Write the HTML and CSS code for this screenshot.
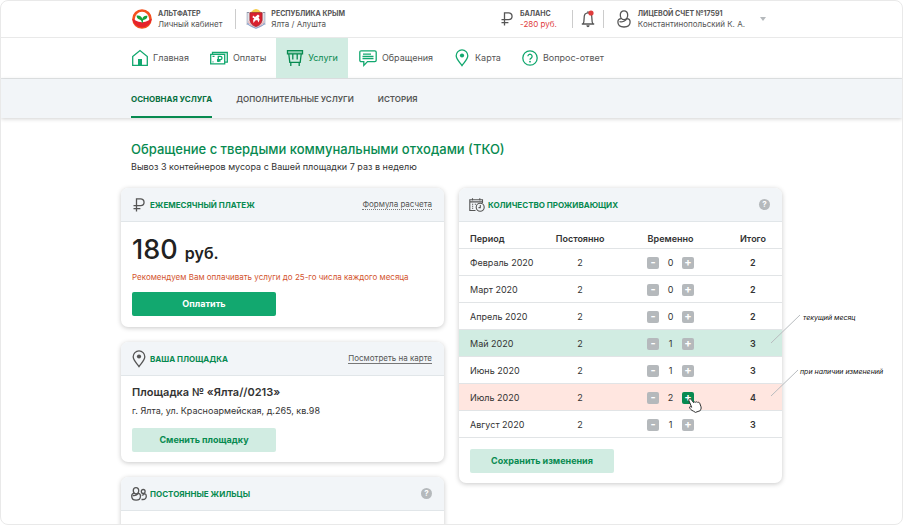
FILE: index.html
```html
<!DOCTYPE html>
<html lang="ru">
<head>
<meta charset="utf-8">
<meta name="viewport" content="width=device-width, initial-scale=1">
<title>Альтфатер — Личный кабинет</title>
<link rel="stylesheet" href="styles.css">
</head>
<body>
<svg class="sprite" aria-hidden="true">
  <symbol id="ruble" viewBox="0 0 12 14"><path d="M3.5 13.5V.8H7.6a3.4 3.4 0 0 1 0 6.9H.5M.5 10.6H7.4" /></symbol>
  <symbol id="pin" viewBox="0 0 14 18"><path d="M7 16.600C4.500 13 1.200 10 1.200 6.700a5.800 5.800 0 0 1 11.600 0C12.800 10 9.500 13 7 16.600Z"/><circle class="fill" cx="7" cy="6.500" r="2.100"/></symbol>
  <symbol id="person" viewBox="0 0 14 18"><path d="M7 .9C4.700.9 3.300 2.600 3.300 4.900 3.300 7.700 5 9.600 7 9.600s3.700-1.900 3.700-4.700C10.700 2.600 9.300.9 7 .9Z"/><path d="M4.200 8.600C2.200 8.600.9 10 .9 12 .9 15.100 3.500 17 7 17s6.100-1.900 6.100-5c0-2-1.300-3.400-3.300-3.400-1 2.200-4.200 3.600-7.300 3"/></symbol>
</svg>
<div class="frame">
  <header class="topbar">
    <div class="wrap topbar-row">
      <a class="brand" href="#">
        <svg class="logo" viewBox="0 0 20 20" aria-hidden="true">
          <circle cx="10" cy="10" r="8.500" fill="#fff" stroke="#f4511e" stroke-width="2.600"/>
          <path d="M.2 10c2.800.3 4.500 3.200 9.800 3.200s7-2.900 9.800-3.200A9.900 9.900 0 0 1 .2 10Z" fill="#e5232b"/>
          <path d="M9.900 13.800C9.600 10.500 8 10.800 6.300 9.900 5 9.200 4.700 7.700 4.600 6.500c3.200-.4 5.300.7 5.600 3.600.5-2.600 2.300-3.800 5.200-3.300.1 2.800-1.600 4.100-4.200 4.100-.4.900-.3 1.900-.2 2.900Z" fill="#17a23c"/>
        </svg>
        <span class="meta"><b>АЛЬТФАТЕР</b><span>Личный кабинет</span></span>
      </a>
      <a class="region" href="#">
        <svg class="crest" viewBox="0 0 20 20" aria-hidden="true">
          <path d="M5 3Q10-3 15 3L13 5H7Z" fill="#f5cb49"/>
          <path d="M1.500 3v13M18.500 3v13" stroke="#c3c8d4" stroke-width="2"/>
          <path d="M1 3.500h2M17 3.500h2" stroke="#8f95a5"/>
          <path d="M1.500 14C3 17.500 7 17.500 10 19.300 13 17.500 17 17.500 18.500 14" fill="none" stroke="#8fa5cc" stroke-width="1.200"/>
          <path d="M2.500 12.500C4 16.500 7 16.500 10 18c3-1.500 6-1.500 7.500-5.500" fill="none" stroke="#e99a9c" stroke-width="1"/>
          <path d="M3.800 3.600h12.400v7.700q-.4 4.500-6.200 6.200-5.800-1.700-6.200-6.200Z" fill="#d9202e" stroke="#8c2d36" stroke-width=".7"/>
          <path d="M7 6.500 9 8l3-2.500 1.700 1.500-1.200 1.500 1.200 2-1.200 3-1.200-2.500-2 .5-1.800 2.500-.4-3 1.200-1.500-1.800-1Z" fill="#fff"/>
        </svg>
        <span class="meta"><b>РЕСПУБЛИКА КРЫМ</b><span>Ялта / Алушта</span></span>
      </a>
      <div class="balance">
        <svg class="line-icon ruble" aria-hidden="true"><use href="#ruble"/></svg>
        <span class="meta"><b>БАЛАНС</b><span class="debt">-280 руб.</span></span>
      </div>
      <button class="bell" type="button" aria-label="Уведомления">
        <svg class="line-icon" viewBox="0 0 14 18" aria-hidden="true"><path d="M.8 14h12.400M2.200 13.600C3.900 11.500 2.200 6.500 4 4.200Q5.200 2.800 7 2.800T10 4.200C11.800 6.500 10.100 11.500 11.800 13.600M7 2.800V1.300"/><path class="fill" d="M5.300 15.300h3.400q-.3 1.900-1.700 1.900t-1.700-1.900Z"/><circle class="alert" cx="10" cy="3" r="2.600"/></svg>
      </button>
      <button class="account" type="button">
        <svg class="line-icon" aria-hidden="true"><use href="#person"/></svg>
        <span class="meta"><b>ЛИЦЕВОЙ СЧЕТ №17591</b><span>Константинопольский К. А.</span></span>
        <span class="caret"></span>
      </button>
    </div>
  </header>

  <nav class="mainnav" aria-label="Разделы">
    <div class="wrap mainnav-row">
      <a href="#"><svg viewBox="0 0 16 16" aria-hidden="true"><path d="M.7 6.500 8 .6l7.300 5.900v8.800H.7Z"/><path class="fill" d="M6 9h4v6.300H6z"/></svg>Главная</a>
      <a href="#"><svg class="wide" viewBox="0 0 18 16" aria-hidden="true"><path d="M.7 4.300h14v9.500H.7ZM2.500 4V2.500h14.800v9.700h-2.300"/><path d="M8.300 12V6.300h2a1.700 1.700 0 0 1 0 3.400H7M7 11h3.500M2.500 6.300h2M2.500 11.800h1"/></svg>Оплаты</a>
      <a class="active" href="#" aria-current="page"><svg viewBox="0 0 16 16" aria-hidden="true"><path class="tint" d="M.5.700h15v3.200H.5Z"/><path d="M1.800 4l1 8.300h10.400L14.200 4M3.800 12.300v3.700M12.200 12.300v3.700M5.800 4v5.500M10.200 4v5.500"/></svg>Услуги</a>
      <a href="#"><svg class="wide" viewBox="0 0 18 16" aria-hidden="true"><path d="M2.200.8h13.600q1.400 0 1.400 1.400v8q0 1.400-1.400 1.400H8.500L4.800 15.400v-3.800H2.200Q.8 11.600.8 10.200V2.200Q.8.8 2.200.8ZM4 4.200h8M3.500 6.500h11M3.500 8.700h11"/></svg>Обращения</a>
      <a href="#"><svg class="tall" aria-hidden="true"><use href="#pin"/></svg>Карта</a>
      <a href="#"><svg viewBox="0 0 16 16" aria-hidden="true"><circle cx="8" cy="8" r="7.200"/><path d="M5.900 6.300a2.100 2.100 0 1 1 3.300 1.800Q8 8.800 8 9.700"/><circle class="fill" cx="8" cy="11.700" r=".9"/></svg>Вопрос-ответ</a>
    </div>
  </nav>

  <nav class="subnav" aria-label="Услуги">
    <div class="wrap subnav-row">
      <a class="active" href="#" aria-current="page">ОСНОВНАЯ УСЛУГА</a>
      <a href="#">ДОПОЛНИТЕЛЬНЫЕ УСЛУГИ</a>
      <a href="#">ИСТОРИЯ</a>
    </div>
  </nav>

  <main class="wrap">
    <div class="intro">
      <h1>Обращение с твердыми коммунальными отходами (ТКО)</h1>
      <p>Вывоз 3 контейнеров мусора с Вашей площадки 7 раз в неделю</p>
    </div>
    <div class="columns">
      <div class="column">
        <section class="card">
          <div class="card-head">
            <svg class="line-icon short" aria-hidden="true"><use href="#ruble"/></svg>
            <h2>ЕЖЕМЕСЯЧНЫЙ ПЛАТЕЖ</h2>
            <a class="dotted" href="#">Формула расчета</a>
          </div>
          <div class="card-body payment">
            <p class="sum">180 <span>руб.</span></p>
            <p class="advice">Рекомендуем Вам оплачивать услуги до 25-го числа каждого месяца</p>
            <button class="btn primary" type="button">Оплатить</button>
          </div>
        </section>
        <section class="card">
          <div class="card-head">
            <svg class="line-icon" aria-hidden="true"><use href="#pin"/></svg>
            <h2>ВАША ПЛОЩАДКА</h2>
            <a href="#">Посмотреть на карте</a>
          </div>
          <div class="card-body site">
            <h3>Площадка № «Ялта//0213»</h3>
            <p>г. Ялта, ул. Красноармейская, д.265, кв.98</p>
            <button class="btn" type="button">Сменить площадку</button>
          </div>
        </section>
        <section class="card">
          <div class="card-head">
            <svg class="line-icon short" viewBox="0 0 16 14" aria-hidden="true"><path d="M5 .7C3.300.7 2.300 2 2.300 3.600 2.300 5.500 3.600 7 5 7s2.700-1.500 2.700-3.400C7.700 2 6.700.7 5 .7ZM2.900 6.300C1.500 6.400.7 7.500.7 9c0 2.600 2 4.200 4.400 4.200S9.500 11.600 9.500 9c0-1.500-.8-2.600-2.300-2.700C6.500 8 4 9 1.800 8.500"/><circle cx="12.200" cy="4.400" r="1.900"/><path d="M13.500 6.600c1.200.3 1.800 1.200 1.800 2.400 0 2.200-1.400 3.500-3.500 3.500h-1.300M13.500 6.600C13 7.900 11.800 8.300 10.800 8.200"/></svg>
            <h2>ПОСТОЯННЫЕ ЖИЛЬЦЫ</h2>
            <button class="help" type="button" aria-label="Справка">?</button>
          </div>
          <div class="card-body"></div>
        </section>
      </div>

      <div class="column">
        <section class="card">
          <div class="card-head">
            <svg class="line-icon short thin" viewBox="0 0 16 14" aria-hidden="true"><path d="M6.500 12.500H.8V1.700h12.700v3.200M.8 3.900h12.700M3.500.3v2.200M10.800.3v2.200M3 6.200h1.200M3 8.200h1.200M3 10.200h1.200M5.800 6.200H7"/><circle cx="11.200" cy="9.300" r="4"/><path d="M11.300 7v2.600H9.500"/></svg>
            <h2>КОЛИЧЕСТВО ПРОЖИВАЮЩИХ</h2>
            <button class="help" type="button" aria-label="Справка">?</button>
          </div>
          <table>
            <thead>
              <tr><th class="period" scope="col">Период</th><th class="constant" scope="col">Постоянно</th><th class="temp" scope="col">Временно</th><th class="total" scope="col">Итого</th></tr>
            </thead>
            <tbody>
              <tr><td>Февраль 2020</td><td>2</td><td><div class="stepper"><button type="button" aria-label="Меньше">-</button><span>0</span><button type="button" aria-label="Больше">+</button></div></td><td>2</td></tr>
              <tr><td>Март 2020</td><td>2</td><td><div class="stepper"><button type="button" aria-label="Меньше">-</button><span>0</span><button type="button" aria-label="Больше">+</button></div></td><td>2</td></tr>
              <tr><td>Апрель 2020</td><td>2</td><td><div class="stepper"><button type="button" aria-label="Меньше">-</button><span>0</span><button type="button" aria-label="Больше">+</button></div></td><td>2</td></tr>
              <tr class="current"><td>Май 2020</td><td>2</td><td><div class="stepper"><button type="button" aria-label="Меньше">-</button><span>1</span><button type="button" aria-label="Больше">+</button></div></td><td>3<div class="note"><svg width="30" height="30" viewBox="0 0 30 30" aria-hidden="true"><path d="M0 29 29 1"/></svg>текущий месяц</div></td></tr>
              <tr><td>Июнь 2020</td><td>2</td><td><div class="stepper"><button type="button" aria-label="Меньше">-</button><span>1</span><button type="button" aria-label="Больше">+</button></div></td><td>3</td></tr>
              <tr class="changed"><td>Июль 2020</td><td>2</td><td><div class="stepper"><button type="button" aria-label="Меньше">-</button><span>2</span><button class="hot" type="button" aria-label="Больше">+<svg class="cursor" viewBox="0 0 14 15" aria-hidden="true"><path d="M1 1.200C1.800.3 2.800.8 3.300 1.600L5.600 4.700C6 3.600 7.200 3.600 7.700 4.400 8.300 3.600 9.300 3.700 9.800 4.500c.9-.6 1.700 0 2 .9L13 8.800c.5 1.700-.3 2.700-.8 3.900l-4.800 1.700c-1-.9-2.200-1.300-3.600-2.100C2.600 11.500 1.500 10 1.500 9c.5-.8 1.500-.4 2.200.3L.9 2.600Q.6 1.800 1 1.200Z"/></svg></button></div></td><td>4<div class="note"><svg width="27" height="30" viewBox="0 0 27 30" aria-hidden="true"><path d="M0 28 27 2"/></svg>при наличии изменений</div></td></tr>
              <tr><td>Август 2020</td><td>2</td><td><div class="stepper"><button type="button" aria-label="Меньше">-</button><span>1</span><button type="button" aria-label="Больше">+</button></div></td><td>3</td></tr>
            </tbody>
          </table>
          <div class="card-foot"><button class="btn" type="button">Сохранить изменения</button></div>
        </section>
      </div>
    </div>
  </main>
</div>
</body>
</html>
```
FILE: styles.css
```css
* { box-sizing: border-box; }
body { margin: 0; background: #fff; color: #333; font: 9px/12px Inter, "Liberation Sans", sans-serif; }
h1, h2, h3, p { margin: 0; }
a { color: inherit; text-decoration: none; }
button { font: inherit; color: inherit; border: 0; padding: 0; background: none; cursor: pointer; }
svg { display: block; flex: none; overflow: visible; }
.sprite { position: absolute; width: 0; height: 0; }

.frame { height: 100vh; overflow: hidden; border: 1px solid #e9e9e9; border-radius: 8px; }
.wrap { width: 100%; max-width: 661px; margin: 0 auto; }

.topbar { border-bottom: 1px solid #e9e9e9; }
.topbar-row { display: flex; align-items: center; height: 36px; padding: 0 16px 0 11px; color: #555; }
.brand, .region, .balance, .account { display: flex; align-items: center; text-align: left; white-space: nowrap; }
.brand { gap: 6px; padding-right: 13px; }
.region { gap: 5px; padding-left: 10px; border-left: 1px solid #ccc; }
.logo, .crest { width: 20px; height: 20px; }
.meta { display: flex; flex-direction: column; font-size: 8px; line-height: 10px; }
.meta b { font-size: 7px; font-weight: 700; }
.balance { gap: 7px; margin-left: auto; padding-right: 15px; }
.debt { color: #e03c3c; }
.bell { padding: 0 8px; border: solid #ccc; border-width: 0 1px; }
.account { gap: 7px; padding-left: 13px; }
.caret { margin-left: 8px; border: 3px solid transparent; border-top: 4px solid #b5b9bc; border-bottom: 0; }
.line-icon { width: 14px; height: 18px; fill: none; stroke: #555; stroke-width: 1.3; }
.line-icon .fill { fill: #555; stroke: none; }
.line-icon .alert { fill: #e03c3c; stroke: none; }
.line-icon.ruble { width: 12px; height: 14px; }
#pin .fill { fill: currentColor; stroke: none; }

.mainnav { border-bottom: 1px solid #e4e7e9; }
.mainnav-row { display: flex; height: 40px; }
.mainnav a { display: flex; align-items: center; gap: 5px; padding: 0 10px 0 11px; color: #555; white-space: nowrap; }
.mainnav svg { width: 16px; height: 16px; fill: none; color: #12a86f; stroke: #12a86f; stroke-width: 1.3; }
.mainnav svg.wide { width: 18px; }
.mainnav svg.tall { height: 18px; }
.mainnav .fill { fill: #12a86f; stroke: none; }
.mainnav .active { background: #d1ece2; color: #078a50; }
.mainnav .active svg { stroke: #078a50; }
.mainnav .tint { fill: #8fcfb3; }

.subnav { background: #f2f5f8; box-shadow: 0 1px 4px rgba(0, 0, 0, .18); }
.subnav-row { display: flex; gap: 24px; height: 39px; padding: 0 10px; }
.subnav a { display: flex; align-items: center; border: solid transparent; border-width: 2px 0; font-size: 8px; font-weight: 600; color: #555; white-space: nowrap; }
.subnav .active { border-bottom-color: #078a50; color: #07703f; font-weight: 700; }

.intro { padding: 22px 10px 13px; }
h1 { font-size: 13px; line-height: 19px; font-weight: 500; color: #078a50; }
.intro p { line-height: 16px; }
.columns { display: flex; align-items: flex-start; gap: 15px; }
.column { flex: 1; min-width: 0; display: flex; flex-direction: column; gap: 15px; }
.card { border-radius: 7px; background: #fff; box-shadow: 0 1px 5px rgba(0, 0, 0, .22); }
.card-head { display: flex; align-items: center; height: 34px; gap: 3px; padding: 0 12px 0 10px; border-radius: 7px 7px 0 0; border-bottom: 1px solid #e1e6e9; background: #f2f5f8; }
.card-head h2 { flex: 1; font-size: 8px; line-height: 12px; font-weight: 700; color: #078a50; }
.card-head a { border-bottom: 1px solid #777; font-size: 8px; line-height: 10px; color: #555; }
.card-head .dotted { border-bottom-style: dotted; }
.card-head .line-icon { width: 16px; color: #555; }
.card-head .short { height: 14px; }
.card-head .thin { stroke-width: 1.1; }
.help { width: 11px; height: 11px; border-radius: 50%; background: #b5b9bc; color: #fff; font-size: 8px; line-height: 11px; font-weight: 700; }
.card-body { min-height: 40px; padding: 10px 11px; }
.btn { display: block; width: 144px; height: 24px; border-radius: 2px; background: #d1ece2; color: #078a50; font-size: 9px; line-height: 24px; font-weight: 700; }
.primary { background: #12a86f; color: #fff; }
.site .btn { margin-top: 10px; }
.payment { padding: 11px; }
.payment .btn { margin-top: 9px; }
.sum { font-size: 27px; line-height: 34px; font-weight: 500; color: #222; }
.sum span { font-size: 16px; line-height: 16px; font-weight: 600; }
.advice { margin-top: 4px; font-size: 8px; color: #d3542e; }
h3 { font-size: 11px; line-height: 12px; font-weight: 600; }
.site p { margin-top: 6px; line-height: 14px; }

table { width: 100%; border-collapse: separate; border-spacing: 0; table-layout: fixed; }
th, td { position: relative; height: 27px; padding: 2px 0 0; border-bottom: 1px solid #e1e4e6; text-align: center; }
th { padding-top: 7px; font-size: 9px; font-weight: 600; }
.period { width: 26%; }
.constant { width: 23%; }
.temp { width: 33%; }
.total { width: 18%; }
th:first-child, td:first-child { padding-left: 11px; text-align: left; }
td:last-child { font-weight: 600; }
.current td { background: #d1ece2; }
.changed td { background: #ffe6e0; }
.stepper { display: flex; align-items: center; justify-content: center; gap: 6px; }
.stepper span { width: 11px; }
.stepper button { position: relative; width: 12px; height: 12px; padding-bottom: 2px; border-radius: 2px; background: #b5b9bc; color: #fff; font-size: 11px; line-height: 10px; font-weight: 700; }
.stepper .hot { background: #078a50; }
.cursor { position: absolute; z-index: 1; left: 6px; top: 6px; width: 14px; height: 15px; fill: #fff; stroke: #333; stroke-width: 1; }
.note { position: absolute; z-index: 1; left: 100%; bottom: 12px; display: flex; gap: 2px; margin-left: -11px; font-size: 7px; line-height: 8px; font-style: italic; font-weight: 400; color: #111; white-space: nowrap; }
.note svg { fill: none; stroke: #b8bcbf; }
.card-foot { padding: 11px 11px 10px; }
```
